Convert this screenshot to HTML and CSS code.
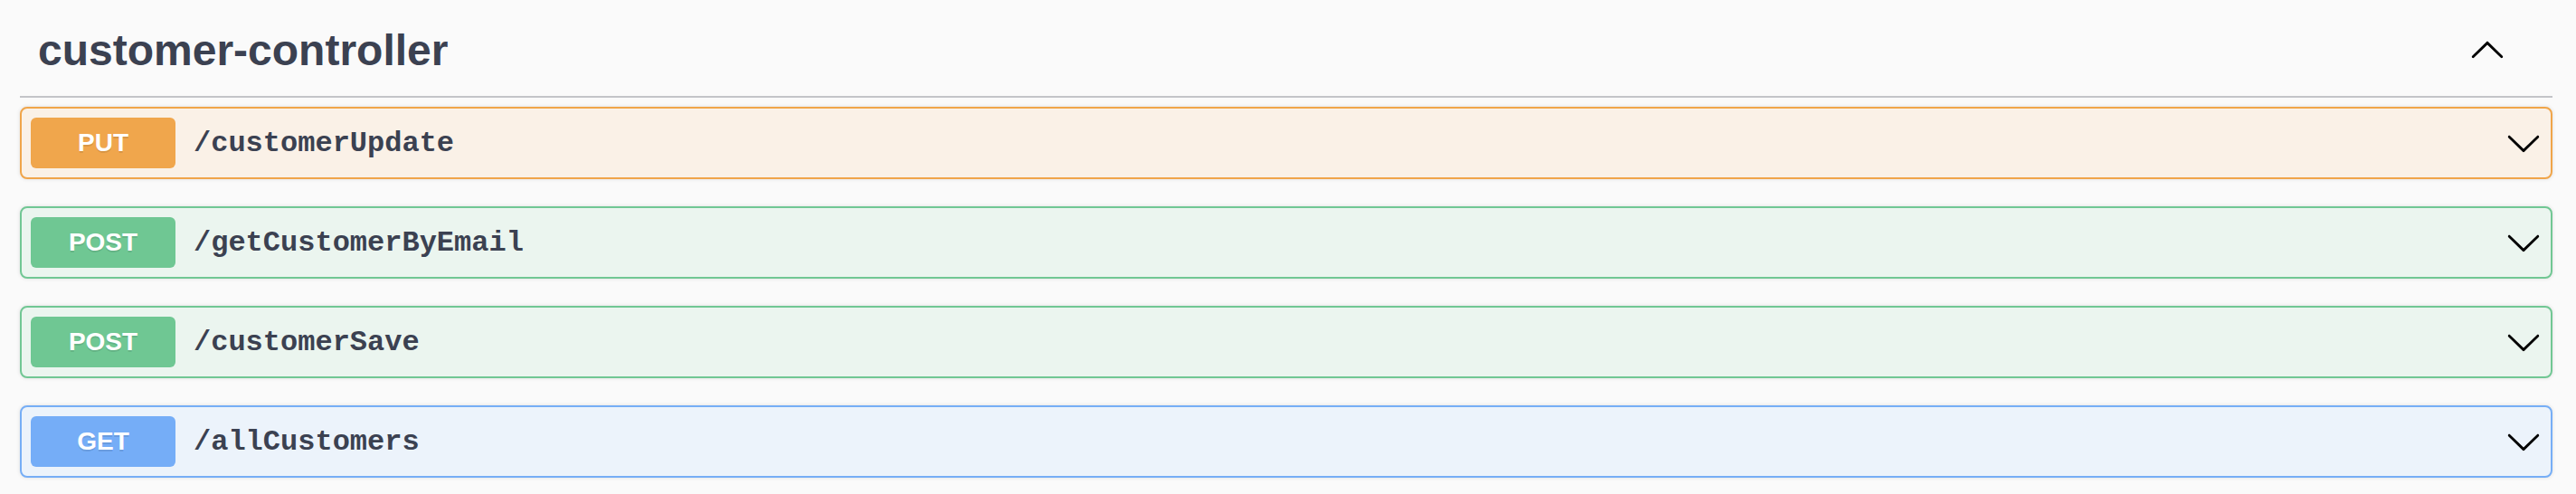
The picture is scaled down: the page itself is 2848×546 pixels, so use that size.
FILE: index.html
```html
<!DOCTYPE html>
<html>
<head>
<meta charset="utf-8">
<link rel="stylesheet" href="styles.css">
</head>
<body>
<div class="section">
  <div class="tag">
    <h3 class="tag-title">customer-controller</h3>
    <svg class="arrow" viewBox="0 0 20 20" width="40" height="40"><path transform="rotate(180 10 10)" d="M17.418 6.109c.272-.268.709-.268.979 0s.271.701 0 .969l-7.908 7.83c-.27.268-.707.268-.979 0l-7.908-7.83c-.27-.268-.27-.701 0-.969.271-.268.709-.268.979 0L10 13.25l7.418-7.141z"/></svg>
  </div>
  <div class="op op-put">
    <span class="method">PUT</span>
    <span class="path">/customerUpdate</span>
    <svg class="arrow" viewBox="0 0 20 20" width="40" height="40"><path d="M17.418 6.109c.272-.268.709-.268.979 0s.271.701 0 .969l-7.908 7.83c-.27.268-.707.268-.979 0l-7.908-7.83c-.27-.268-.27-.701 0-.969.271-.268.709-.268.979 0L10 13.25l7.418-7.141z"/></svg>
  </div>
  <div class="op op-post">
    <span class="method">POST</span>
    <span class="path">/getCustomerByEmail</span>
    <svg class="arrow" viewBox="0 0 20 20" width="40" height="40"><path d="M17.418 6.109c.272-.268.709-.268.979 0s.271.701 0 .969l-7.908 7.83c-.27.268-.707.268-.979 0l-7.908-7.83c-.27-.268-.27-.701 0-.969.271-.268.709-.268.979 0L10 13.25l7.418-7.141z"/></svg>
  </div>
  <div class="op op-post">
    <span class="method">POST</span>
    <span class="path">/customerSave</span>
    <svg class="arrow" viewBox="0 0 20 20" width="40" height="40"><path d="M17.418 6.109c.272-.268.709-.268.979 0s.271.701 0 .969l-7.908 7.83c-.27.268-.707.268-.979 0l-7.908-7.83c-.27-.268-.27-.701 0-.969.271-.268.709-.268.979 0L10 13.25l7.418-7.141z"/></svg>
  </div>
  <div class="op op-get">
    <span class="method">GET</span>
    <span class="path">/allCustomers</span>
    <svg class="arrow" viewBox="0 0 20 20" width="40" height="40"><path d="M17.418 6.109c.272-.268.709-.268.979 0s.271.701 0 .969l-7.908 7.83c-.27.268-.707.268-.979 0l-7.908-7.83c-.27-.268-.27-.701 0-.969.271-.268.709-.268.979 0L10 13.25l7.418-7.141z"/></svg>
  </div>
</div>
</body>
</html>
```
FILE: styles.css
```css
html, body {
  margin: 0;
  padding: 0;
  background: #fafafa;
}
body {
  font-family: "Liberation Sans", Arial, sans-serif;
  color: #3b4151;
}
.section {
  margin-left: 22px;
  width: 2800px;
}
.tag {
  display: flex;
  align-items: center;
  padding: 28px 52px 23px 20px;
  border-bottom: 2px solid #c3c4c8;
  margin-bottom: 10px;
}
.tag-title {
  flex: 1;
  margin: 0;
  font-size: 48px;
  font-weight: bold;
  line-height: 55px;
  color: #3b4151;
}
.arrow {
  display: block;
  flex: none;
  fill: #000;
}
.op {
  display: flex;
  align-items: center;
  padding: 10px;
  border: 2px solid;
  border-radius: 8px;
  margin-bottom: 30px;
  box-shadow: 0 0 4px rgba(0, 0, 0, 0.12);
}
.method {
  display: block;
  width: 160px;
  padding: 12px 0;
  line-height: 32px;
  font-size: 28px;
  font-weight: bold;
  text-align: center;
  color: #fff;
  border-radius: 6px;
  text-shadow: 0 2px 0 rgba(0, 0, 0, 0.1);
}
.path {
  flex: 1;
  padding: 0 20px;
  font-family: "Liberation Mono", "Courier New", monospace;
  font-weight: bold;
  font-size: 32px;
  color: #3b4151;
}
.op-put {
  background: #faf1e7;
  border-color: #f0a54a;
}
.op-put .method {
  background: #f0a64c;
}
.op-post {
  background: #ebf5ef;
  border-color: #71c794;
}
.op-post .method {
  background: #6fc793;
}
.op-get {
  background: #ecf3fb;
  border-color: #76aef6;
}
.op-get .method {
  background: #75adf7;
}
```
